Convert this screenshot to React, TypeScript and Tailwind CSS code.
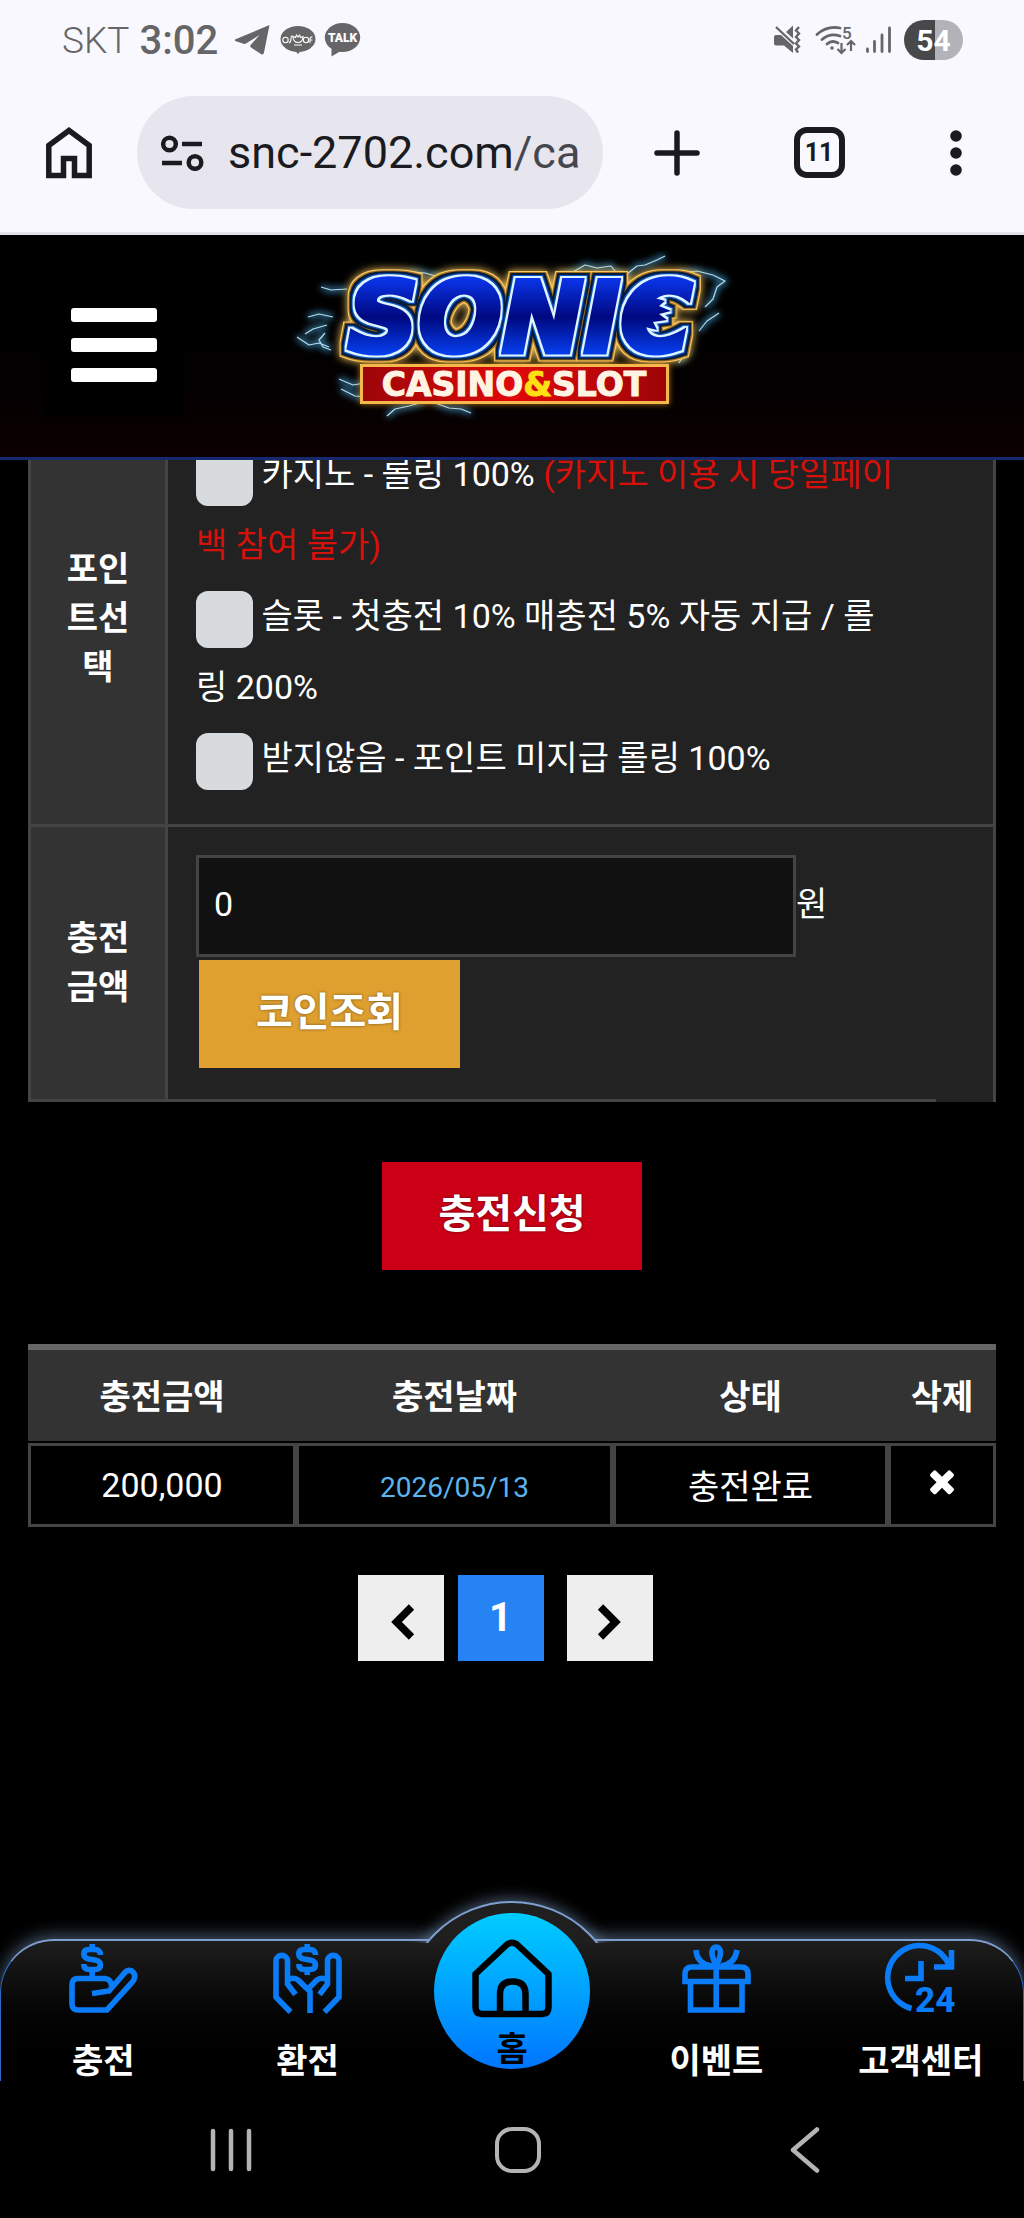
import type { ReactNode } from "react";

/* ---------- Phone status bar ---------- */

function StatusBar() {
  return (
    <div className="flex h-20 items-center justify-between pr-[61px] pl-[62px] text-[#666668]">
      <div className="flex items-center">
        <span className="text-[37px] font-light">SKT</span>
        <span className="ml-2.5 text-[40px] font-medium">3:02</span>
        <svg className="ml-[17px] h-[30px] w-[35px]" viewBox="0 0 35 30" fill="currentColor" aria-hidden="true">
          <path d="M0 14.500 34.500 0 29 27.500q-.6 3-3 1.500L16 22.500q-1.500-1.500 0-3L24.500 10 11 18.500q-1.200.7-2.500.3L1 16.300q-1.800-.8-1-1.800Z" />
        </svg>
        <svg className="ml-[10px] h-[36px] w-[36px]" viewBox="0 0 36 36" aria-hidden="true">
          <ellipse cx="18" cy="17" rx="17.500" ry="13" fill="currentColor" />
          <path d="m14.500 28 3.500 4 3.500-4Z" fill="currentColor" />
          <g fill="none" stroke="#fff" strokeWidth="1.100">
            <circle cx="5.500" cy="18" r="2.700" />
            <path d="M9 21q2-1 2-4.500t2.500-2M13 14.500q0 6 5 6t5-6l-2.500 1-1-2.500-1.500 2-1.500-2-1 2.500ZM14 23h8" />
            <circle cx="26" cy="18" r="2.700" />
            <path d="M30 21v-4q.5-2.500 2.500-2M29.500 18h3" />
          </g>
        </svg>
        <svg className="ml-2 h-[36px] w-[37px]" viewBox="0 0 37 36" aria-hidden="true">
          <ellipse cx="18.500" cy="15.500" rx="17.700" ry="14.500" fill="currentColor" />
          <path d="M7.500 24v10.500l10-6Z" fill="currentColor" />
          <text x="18.500" y="20" textAnchor="middle" fontSize="12" fontWeight="900" fill="#fff" fontFamily="Roboto, sans-serif">
            TALK
          </text>
        </svg>
      </div>

      <div className="flex items-center">
        <svg className="h-[30px] w-[30px]" viewBox="0 0 30 30" aria-hidden="true">
          <path d="M1 12q0-2 2-2h5L20 21v7l-9-7.500H3q-2 0-2-2ZM13 7l7-6.500v13Z" fill="currentColor" />
          <path d="m3 2 18 17M26 2l-3 3.500 3 3-3 3.500 3 3-3 3.500 3 3-3 3 2 3" fill="none" stroke="currentColor" strokeWidth="2.400" />
        </svg>
        <svg className="ml-[13px] h-[30px] w-[40px] overflow-visible" viewBox="0 0 40 30" fill="none" stroke="currentColor" aria-hidden="true">
          <path d="M1 9.500Q11 .5 24 3M6 14.500q8-7 18-3.500M11 19q5-4.500 11-1" strokeWidth="2.800" strokeLinecap="round" />
          <circle cx="16" cy="23" r="1.800" fill="currentColor" stroke="none" />
          <path d="M25.500 18v10m-4-4 4 4 4-4M35 26V16m-4 4 4-4 4 4" strokeWidth="2.200" />
          <text x="26" y="14" fontSize="17" fontWeight="500" fill="currentColor" stroke="none" fontFamily="Roboto, sans-serif">
            5
          </text>
        </svg>
        <svg className="ml-2 h-[28px] w-[28px]" viewBox="0 0 28 28" stroke="currentColor" strokeWidth="2.800" strokeLinecap="round" aria-hidden="true">
          <path d="M3.500 23v2.500M10.500 15.500v10M18 9v16.500M25.500 2v23.500" />
        </svg>
        <span className="ml-3 flex h-10 w-[59px] items-center justify-center rounded-full bg-linear-to-r from-[#48484b] from-52% to-[#b2b2b8] to-52% text-[30px] font-bold text-white">
          54
        </span>
      </div>
    </div>
  );
}

/* ---------- Browser toolbar ---------- */

function BrowserBar() {
  return (
    <div className="flex h-[155px] items-start border-b-[3px] border-[#e2e2e8] pt-4 text-[#1a1b21]">
      <button type="button" aria-label="홈페이지" className="flex h-[113px] w-[137px] shrink-0 items-center justify-center">
        <svg className="h-[52px] w-[46px]" viewBox="0 0 46 52" fill="none" stroke="currentColor" strokeWidth="5.500" aria-hidden="true">
          <path d="M2.800 18.500V48.500H17.500V31.500H28.500V48.500H43.200V18.500L23 3.500Z" />
        </svg>
      </button>
      <button type="button" aria-label="주소창" className="flex h-[113px] min-w-0 flex-1 items-center overflow-hidden rounded-full bg-[#e7e6ee] pl-6 text-left">
        <svg className="h-[36px] w-[43px] shrink-0" viewBox="0 0 43 36" fill="none" stroke="currentColor" strokeWidth="4.500" aria-hidden="true">
          <circle cx="8.500" cy="9" r="6.300" />
          <path d="M21 9h20M1 28h20" />
          <circle cx="34" cy="27.500" r="6.300" />
        </svg>
        <span className="ml-6 text-[45px] whitespace-nowrap">
          snc-2702.com<span className="text-[#46464f]">/ca</span>
        </span>
      </button>
      <button type="button" aria-label="새 탭" className="flex h-[113px] w-[148px] shrink-0 items-center justify-center">
        <svg className="size-[46px]" viewBox="0 0 46 46" stroke="currentColor" strokeWidth="5.500" strokeLinecap="round" aria-hidden="true">
          <path d="M23 3v40M3 23h40" />
        </svg>
      </button>
      <button type="button" aria-label="탭 11개" className="flex h-[113px] w-[136px] shrink-0 items-center justify-center">
        <span className="flex size-[51px] items-center justify-center rounded-[13px] border-[6px] border-current text-[25px] font-bold">
          11
        </span>
      </button>
      <button type="button" aria-label="메뉴" className="flex h-[113px] w-[137px] shrink-0 items-center justify-center">
        <svg className="h-[46px] w-[12px]" viewBox="0 0 12 46" fill="currentColor" aria-hidden="true">
          <circle cx="6" cy="6" r="5.800" />
          <circle cx="6" cy="23" r="5.800" />
          <circle cx="6" cy="40" r="5.800" />
        </svg>
      </button>
    </div>
  );
}

/* ---------- Site header ---------- */

function Logo() {
  return (
    <svg className="h-[190px] w-[450px]" viewBox="0 0 450 190" role="img" aria-label="SONIC CASINO&SLOT">
      <defs>
        <linearGradient id="blue" gradientUnits="userSpaceOnUse" x1="0" y1="28" x2="0" y2="104">
          <stop offset="0" stopColor="#0a34e8" />
          <stop offset=".5" stopColor="#000880" />
          <stop offset="1" stopColor="#0640f0" />
        </linearGradient>
        <linearGradient id="red" x1="0" y1="0" x2="1" y2="0">
          <stop offset="0" stopColor="#9c0508" />
          <stop offset=".5" stopColor="#e0080a" />
          <stop offset="1" stopColor="#9c0508" />
        </linearGradient>
        <filter id="glow" x="-20%" y="-20%" width="140%" height="140%">
          <feGaussianBlur stdDeviation="3" />
        </filter>
        {/* Rings grow outward from the letters: white, blue, navy, dark gold, light gold, then a soft halo. */}
        <filter id="rings" filterUnits="userSpaceOnUse" x="0" y="0" width="450" height="190" colorInterpolationFilters="sRGB">
          <feMorphology in="SourceAlpha" operator="dilate" radius="1.500" result="a1" />
          <feMorphology in="SourceAlpha" operator="dilate" radius="3" result="a2" />
          <feMorphology in="SourceAlpha" operator="dilate" radius="5" result="a3" />
          <feMorphology in="SourceAlpha" operator="dilate" radius="6" result="a4" />
          <feMorphology in="SourceAlpha" operator="dilate" radius="7" result="a5" />
          <feFlood floodColor="#dff4ff" />
          <feComposite in2="a1" operator="in" result="c1" />
          <feFlood floodColor="#0a58c8" />
          <feComposite in2="a2" operator="in" result="c2" />
          <feFlood floodColor="#041c40" />
          <feComposite in2="a3" operator="in" result="c3" />
          <feFlood floodColor="#a06c20" />
          <feComposite in2="a4" operator="in" result="c4" />
          <feFlood floodColor="#f8c860" />
          <feComposite in2="a5" operator="in" result="c5" />
          <feGaussianBlur in="c5" stdDeviation="4" result="halo" />
          <feMerge>
            <feMergeNode in="halo" />
            <feMergeNode in="c5" />
            <feMergeNode in="c4" />
            <feMergeNode in="c3" />
            <feMergeNode in="c2" />
            <feMergeNode in="c1" />
            <feMergeNode in="SourceGraphic" />
          </feMerge>
        </filter>
        <g id="bolts" fill="none" strokeLinejoin="round">
          <path d="M60 38 44 39 34 36M46 66l-14-3-11 3M40 74 26 78l-8 5M42 96 32 92 22 94 10 86M38 82l-6 7 4 7 8 3M52 128l14 6 12-2M54 138l14 7 12 1M100 165l8-7 14-3 14-4M148 152l14 5 12 1 10 4" />
          <path d="m112 26 14-5 12 1 14 4 16 1M270 28l16-7 12-7 12 3 14-2 8 10 8-2 10-8 8-1 12-5 8-4M392 22l18-2 16 4 12 6-8 6-4 12-8 8M432 62l-12 8-8 10M400 98l-8 14" />
        </g>
      </defs>
      <use href="#bolts" stroke="#4aa8e0" strokeWidth="6" opacity=".6" filter="url(#glow)" />
      <use href="#bolts" stroke="#b4dcec" strokeWidth="1.200" />
      <g filter="url(#rings)">
        <text
          x="233"
          y="101"
          textAnchor="middle"
          fontFamily="'DejaVu Sans', sans-serif"
          fontSize="98"
          fontWeight="700"
          fontStyle="italic"
          fill="url(#blue)"
          stroke="url(#blue)"
          strokeWidth="5"
        >
          SONIC
        </text>
        <path d="m364 46 14 4-6 5 12 5-12 3 8 6-14 2 4 8-16-4Z" fill="url(#blue)" />
      </g>
      <rect x="73" y="113" width="309" height="40" fill="#f0a020" opacity=".7" filter="url(#glow)" />
      <rect x="74.500" y="114.500" width="306" height="37" fill="url(#red)" stroke="#f5b84a" strokeWidth="3" />
      <text x="227" y="145" textAnchor="middle" fontFamily="'DejaVu Sans', sans-serif" fontSize="33" fontWeight="700" fill="#fff4e4" stroke="#fff4e4">
        CASINO
        <tspan fill="#ffe014" stroke="#ffe014">&amp;</tspan>
        SLOT
      </text>
    </svg>
  );
}

function SiteHeader() {
  return (
    <header className="relative z-10 grid h-[225px] grid-cols-[1fr_auto_1fr] items-center border-b-[3px] border-[#16296c] bg-linear-to-b from-black to-[#0c0002]">
      <button type="button" aria-label="전체 메뉴" className="ml-[43px] flex size-[142px] flex-col items-center justify-center gap-4 bg-black pb-0.5">
        <span className="h-[14px] w-[86px] rounded-[3px] bg-white" />
        <span className="h-[14px] w-[86px] rounded-[3px] bg-white" />
        <span className="h-[14px] w-[86px] rounded-[3px] bg-white" />
      </button>
      <a href="#home">
        <Logo />
      </a>
    </header>
  );
}

/* ---------- Deposit form ---------- */

function PointOption({ id, children }: { id: string; children: ReactNode }) {
  return (
    <div>
      <input id={id} type="checkbox" className="size-[57px] appearance-none rounded-xl bg-[#d7dbde] align-middle checked:bg-[#2683f4]" />{" "}
      <label htmlFor={id}>{children}</label>
    </div>
  );
}

function DepositForm() {
  return (
    <form className="-mt-[47px] px-7" onSubmit={(e) => e.preventDefault()}>
      <table className="w-full border-separate border-spacing-0 border-l-[3px] border-[#444]">
        <tbody>
          <tr>
            <th className="w-[137px] border-r-[3px] border-b-[3px] border-[#444] bg-[#333] px-7 font-bold" scope="row">
              포인트선택
            </th>
            <td colSpan={2} className="border-r-[3px] border-b-[3px] border-[#444] bg-[#222] pt-[26px] pr-[92px] pb-[30px] pl-7 leading-[71px]">
              <PointOption id="casino">
                카지노 - 롤링 100% <span className="text-[#d8100c]">(카지노 이용 시 당일페이백 참여 불가)</span>
              </PointOption>
              <PointOption id="slot">슬롯 - 첫충전 10% 매충전 5% 자동 지급 / 롤링 200%</PointOption>
              <PointOption id="none">받지않음 - 포인트 미지급 롤링 100%</PointOption>
            </td>
          </tr>
          <tr>
            <th className="border-r-[3px] border-b-[3px] border-[#444] bg-[#333] px-7 font-bold" scope="row">
              <label htmlFor="amount">충전금액</label>
            </th>
            <td className="border-b-[3px] border-[#444] bg-[#222] pt-7 pb-[31px] pl-7">
              <div className="flex items-center">
                <input id="amount" type="text" defaultValue="0" className="h-[102px] w-[600px] min-w-0 border-[3px] border-[#444] bg-[#111] px-[15px] pb-1" />
                <span className="pb-1">원</span>
              </div>
              <button type="button" className="mt-[3px] ml-[3px] flex h-[108px] w-[261px] items-center justify-center bg-[#dfa030] pb-1 text-[40px] font-bold text-shadow-[0_0_3px_rgb(0_0_0/0.5)]">
                코인조회
              </button>
            </td>
            <td className="w-[60px] border-r-[3px] border-[#444] bg-[#222]" />
          </tr>
        </tbody>
      </table>
      <button type="submit" className="mx-auto mt-[60px] flex h-[108px] w-[260px] items-center justify-center bg-[#cb0017] pb-1 text-[40px] font-bold text-shadow-[0_0_3px_rgb(0_0_0/0.5)]">
        충전신청
      </button>
    </form>
  );
}

/* ---------- Deposit history ---------- */

function History() {
  const head = "h-[99px] border-t-[6px] border-b-2 border-t-[#666] border-b-black bg-[#333] pt-[3px] font-bold";
  const cell = "h-[84px] border-[3px] border-[#444]";
  return (
    <div className="mt-[74px] px-7">
      <table className="w-full table-fixed border-separate border-spacing-0 text-center">
        <thead>
          <tr>
            <th scope="col" className={`w-[268px] ${head}`}>충전금액</th>
            <th scope="col" className={`w-[317px] ${head}`}>충전날짜</th>
            <th scope="col" className={`w-[275px] ${head}`}>상태</th>
            <th scope="col" className={head}>삭제</th>
          </tr>
        </thead>
        <tbody>
          <tr>
            <td className={cell}>200,000</td>
            <td className={`pt-1 text-[28px] text-[#5cb4ee] ${cell}`}>2026/05/13</td>
            <td className={`pt-1 ${cell}`}>충전완료</td>
            <td className={cell}>
              <button type="button" aria-label="삭제" className="mx-auto mb-2 block">
                <svg className="size-[36px]" viewBox="0 0 1792 1792" fill="currentColor" aria-hidden="true">
                  <path d="M1490 1322q0 40-28 68l-136 136q-28 28-68 28t-68-28l-294-294-294 294q-28 28-68 28t-68-28l-136-136q-28-28-28-68t28-68l294-294-294-294q-28-28-28-68t28-68l136-136q28-28 68-28t68 28l294 294 294-294q28-28 68-28t68 28l136 136q28 28 28 68t-28 68l-294 294 294 294q28 28 28 68z" />
                </svg>
              </button>
            </td>
          </tr>
        </tbody>
      </table>
    </div>
  );
}

function Pager() {
  return (
    <nav aria-label="페이지" className="mt-12 flex justify-center pr-[14px]">
      <button type="button" aria-label="이전" className="flex size-[86px] items-center justify-center bg-[#eee] pt-2 pl-1 text-black">
        <svg className="h-[38px] w-[26px]" viewBox="0 0 26 38" fill="none" stroke="currentColor" strokeWidth="7.500" aria-hidden="true">
          <path d="M21.500 4 6.500 19l15 15" />
        </svg>
      </button>
      <a href="#page-1" aria-current="page" className="mr-[23px] ml-[14px] flex size-[86px] items-center justify-center bg-[#2683f4] pb-0.5 text-[40px] font-bold">
        1
      </a>
      <button type="button" aria-label="다음" className="flex size-[86px] items-center justify-center bg-[#eee] pt-2 pr-0.5 text-black">
        <svg className="h-[38px] w-[26px]" viewBox="0 0 26 38" fill="none" stroke="currentColor" strokeWidth="7.500" aria-hidden="true">
          <path d="m4.500 4 15 15-15 15" />
        </svg>
      </button>
    </nav>
  );
}

/* ---------- Bottom tab bar ---------- */

const dollar = "M31.500 11Q31.500 5.500 26 5.500H20Q14.800 5.500 14.800 10 14.800 14 20 15L26 16Q31.500 17 31.500 21 31.500 25.500 26 25.500H20Q14.800 25.500 14.800 20";

function TabIcon({ children }: { children: ReactNode }) {
  return (
    <svg className="size-[69px] overflow-visible" viewBox="0 0 69 69" fill="none" stroke="#0b7cf8" strokeWidth="5.600" aria-hidden="true">
      {children}
    </svg>
  );
}

function Tab({ label, children }: { label: string; children: ReactNode }) {
  return (
    <a href="#tab" className="flex flex-1 flex-col items-center gap-6 pt-[3px] font-bold">
      <TabIcon>{children}</TabIcon>
      {label}
    </a>
  );
}

function TabBar() {
  return (
    <nav aria-label="주 메뉴" className="relative mt-auto h-[142px] rounded-t-[54px] border-x border-t-2 border-x-[#2f68c8] border-t-[#7d9fd2] bg-linear-to-b from-[#1e1e1e] to-black shadow-[0_-4px_16px_rgb(130_160_200/0.5)]">
      <div className="absolute bottom-[138px] left-1/2 flex h-[58px] w-[220px] -translate-x-1/2 justify-center overflow-hidden">
        <div className="mt-[16px] size-[220px] shrink-0 rounded-full border-2 border-[#7d9fd2] bg-[#1f1f1f] shadow-[0_-3px_14px_rgb(130_160_200/0.5)]" />
      </div>
      <div className="relative flex">
        <Tab label="충전">
          <path d={dollar} />
          <path d="M23.200 0v6M23.200 25v9" />
          <path d="M23 49.500 40 47 55 29.500C58 25.500 62 25.500 64.500 28.500 67 32 65.500 35.500 63 38.500L38 66H9Q3 66 3 60V41Q3 34.500 9 34.500H36Q43 35.500 42.500 43" />
        </Tab>
        <Tab label="환전">
          <g transform="translate(11)">
            <path d={dollar} />
            <path d="M23.200 0v6M23.200 25v6" />
          </g>
          <path d="M17.500 68 3 53V17C3 9.500 14.500 9.500 14.500 17V40L22.500 50.500M15 36Q20 32.500 25 36L37 47.500V69" />
          <path d="M51.500 68 66 53V17C66 9.500 54.500 9.500 54.500 17V40L46.500 50.500M54 36Q49 32.500 44 36L35 45" />
        </Tab>
        <div className="flex flex-1 justify-center">
          <a
            href="#home"
            className="-mt-[28px] flex size-[156px] flex-col items-center rounded-full bg-linear-to-b from-[#00ccff] to-[#0074ff] pt-[26px] leading-[62px] font-bold text-black"
          >
            <svg className="h-[79px] w-[80px] shrink-0" viewBox="0 0 80 79" fill="none" stroke="currentColor" strokeWidth="6.500" strokeLinejoin="round" aria-hidden="true">
              <path d="M35 5.500Q40 2 45 5.500L76.500 35V68Q76.500 75 70 75H10Q3.500 75 3.500 68V35ZM28 75V55Q28 42.500 40.500 42.500 53.500 42.500 53.500 55V75" />
            </svg>
            홈
          </a>
        </div>
        <Tab label="이벤트">
          <path d="M3 37.500V30Q3 23 10 23H59Q66 23 66 30V37.500ZM8.500 37.500V66H60V37.500M34.200 20V66" />
          <path d="M34.200 22Q29.500 12 30 7.500 31 3 34.200 3 37.500 3 38.500 7.500 39 12 34.200 22M14 6Q15 20 30 22M55 6Q53 20 39 22" />
        </Tab>
        <Tab label="고객센터">
          <path d="M25.500 64.500A32 32 0 1 1 63.500 22M48 23H65.500V6M35 17V34.500H19" />
          <text x="29" y="68" fontSize="35" fontWeight="800" fill="#0b7cf8" stroke="none" fontFamily="Roboto, sans-serif">
            24
          </text>
        </Tab>
      </div>
    </nav>
  );
}

function SystemNav() {
  return (
    <div className="relative grid h-[137px] grid-cols-3 items-center justify-items-center bg-black pr-[76px] pl-[87px] text-[#b4b4b4]">
      <button type="button" aria-label="최근 앱">
        <svg className="size-[46px]" viewBox="0 0 46 46" stroke="currentColor" strokeWidth="4.500" strokeLinecap="round" aria-hidden="true">
          <path d="M5 4v38M23 4v38M41 4v38" />
        </svg>
      </button>
      <button type="button" aria-label="홈 화면" className="size-[46px] rounded-[17px] border-4 border-current" />
      <button type="button" aria-label="뒤로">
        <svg className="size-[46px]" viewBox="0 0 46 46" fill="none" stroke="currentColor" strokeWidth="4.500" strokeLinecap="round" strokeLinejoin="round" aria-hidden="true">
          <path d="M35 2.500 11 23l24 20.500" />
        </svg>
      </button>
    </div>
  );
}

export default function App() {
  return (
    <div className="flex min-h-screen flex-col bg-black font-[Roboto,'Noto_Sans_CJK_KR',sans-serif] text-[34px] leading-[49px] text-white" lang="ko">
      <div className="relative z-10 bg-[#f9f8ff]">
        <StatusBar />
        <BrowserBar />
      </div>
      <SiteHeader />
      <main>
        <DepositForm />
        <History />
        <Pager />
      </main>
      <TabBar />
      <SystemNav />
    </div>
  );
}
